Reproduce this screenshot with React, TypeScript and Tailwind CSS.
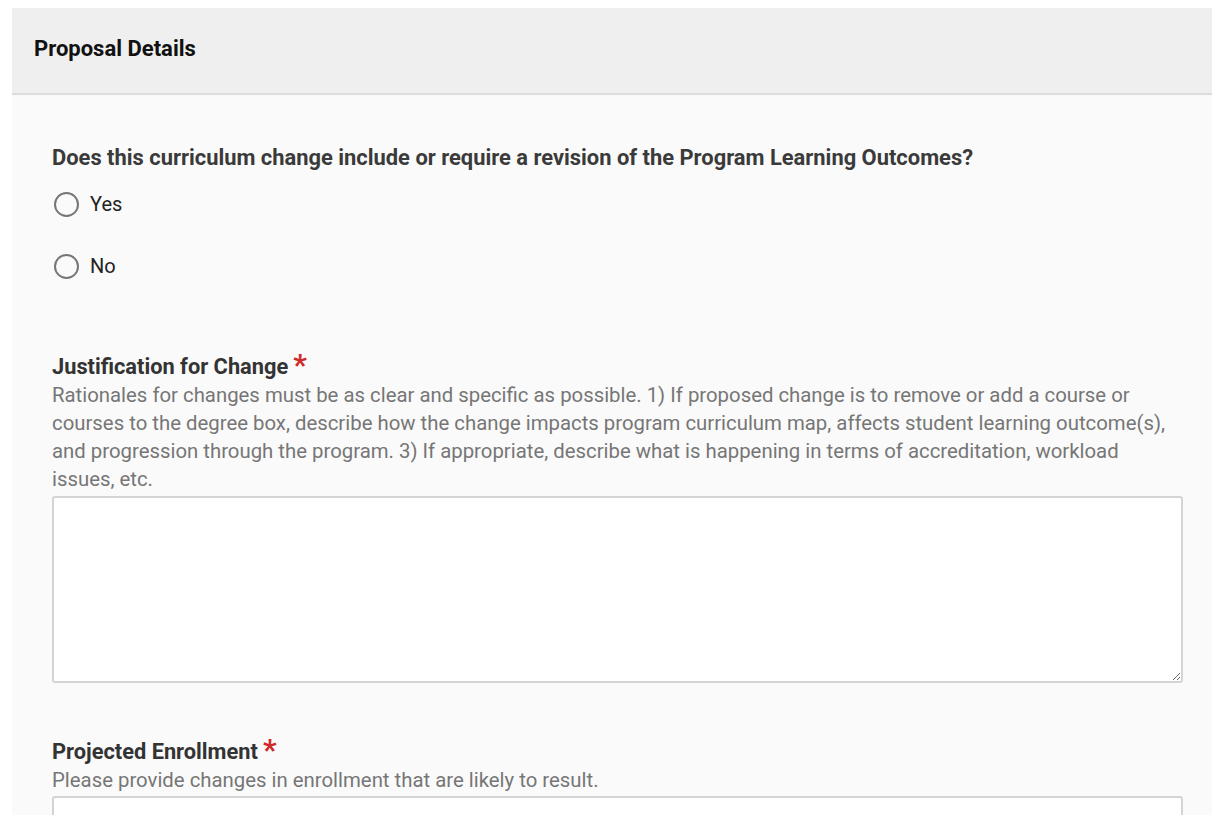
import React from "react";

const font = { fontFamily: "Roboto, 'Noto Sans', Arial, sans-serif" };

function Radio({ label }: { label: string }) {
  return (
    <label className="flex items-center gap-[11px] cursor-pointer">
      <span className="ml-[2px] h-[25px] w-[25px] rounded-full border-2 border-[#767676] bg-[#fafafa]" />
      <span className="text-[20px] text-[#222]">{label}</span>
    </label>
  );
}

function Label({ text }: { text: string }) {
  return (
    <div className="flex items-start">
      <span className="text-[21.8px] font-bold text-[#333] leading-[28px]">{text}</span>
      <span className="ml-[5px] text-[30px] leading-[24px] text-[#cf2a27] font-bold">*</span>
    </div>
  );
}

export default function App() {
  return (
    <div className="h-[838px] overflow-hidden bg-white pt-2 pl-3" style={font}>
      <div className="h-[807px] w-[1200px] overflow-hidden bg-[#fafafa]">
        {/* header */}
        <div className="flex h-[87px] items-center border-b-2 border-[#dcdcdc] bg-[#efefef] px-[22px] pb-[4px]">
          <h2 className="text-[22px] font-bold text-[#111]">Proposal Details</h2>
        </div>

        <div className="pl-[40px] pr-[29px] pt-[51px]">
          <p className="text-[21.9px] font-bold leading-[24px] text-[#3a3a3a]">
            Does this curriculum change include or require a revision of the Program Learning Outcomes?
          </p>
          <div className="mt-[19px] flex flex-col gap-[32px]">
            <Radio label="Yes" />
            <Radio label="No" />
          </div>

          <div className="mt-[72px]">
            <Label text="Justification for Change" />
            <p className="text-[20.35px] leading-[28px] text-[#767676]">
              Rationales for changes must be as clear and specific as possible. 1) If proposed change is to remove or
              add a course or courses to the degree box, describe how the change impacts program curriculum map,
              affects student learning outcome(s), and progression through the program. 3) If appropriate, describe
              what is happening in terms of accreditation, workload issues, etc.
            </p>
            <textarea className="mt-[3px] block h-[187px] w-full rounded-[3px] border-2 border-[#d4d4d4] bg-white outline-none" />
          </div>

          <div className="mt-[55px]">
            <Label text="Projected Enrollment" />
            <p className="text-[20.35px] leading-[28px] text-[#767676]">
              Please provide changes in enrollment that are likely to result.
            </p>
            <input className="mt-[2px] block h-[44px] w-full rounded-[3px] border-2 border-[#d4d4d4] bg-white outline-none" />
          </div>
        </div>
      </div>
    </div>
  );
}
